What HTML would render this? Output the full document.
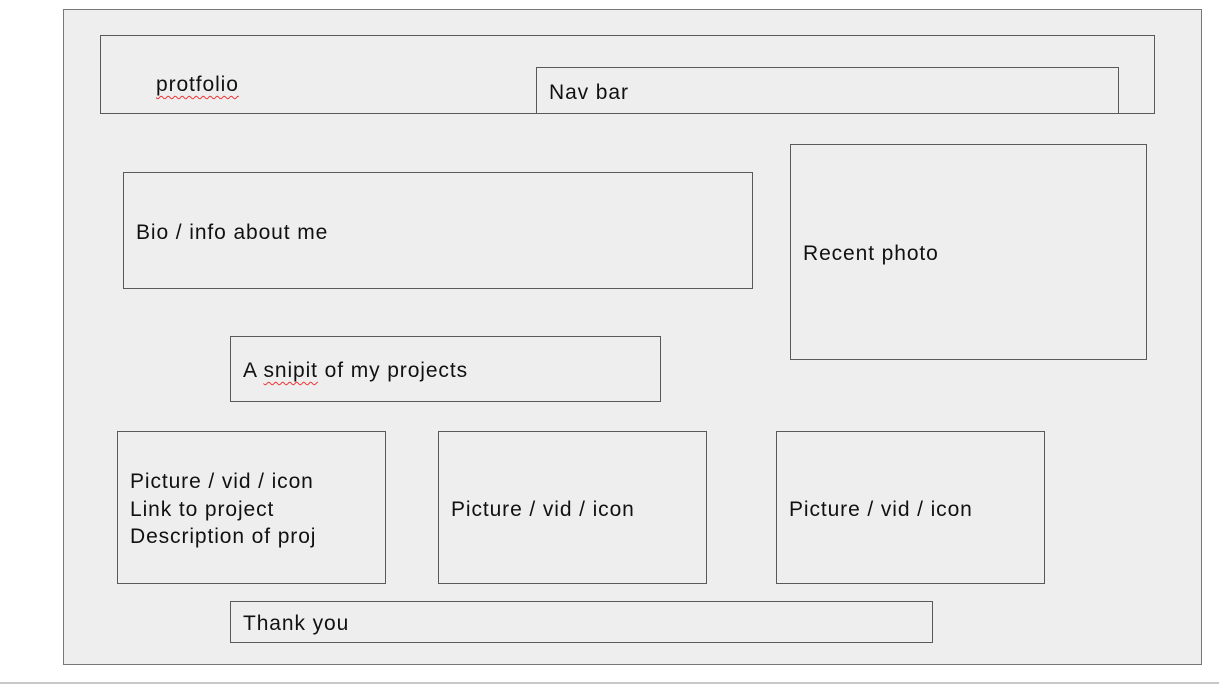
<html><head><style>
body{margin:0;width:1219px;height:685px;background:#fff;position:relative;overflow:hidden;font-family:"Liberation Sans",Arial,sans-serif;font-size:21px;letter-spacing:0.9px;color:#111}
.b{position:absolute;border:1px solid #595959;box-sizing:border-box;background:#eee}
.t{position:absolute;white-space:nowrap;line-height:27px}
.sq{text-decoration:underline wavy #e33;text-decoration-thickness:1px;text-underline-offset:4px;text-decoration-skip-ink:none}
</style></head><body>
<div class="b" style="left:63px;top:9px;width:1139px;height:656px;border-color:#777"></div>
<div style="position:absolute;left:0;top:682px;width:1219px;height:2px;background:#c8c8c8"></div>
<div class="b" style="left:100px;top:35px;width:1055px;height:79px"></div>
<div class="t" style="left:156px;top:71px"><span class="sq">protfolio</span></div>
<div class="b" style="left:536px;top:67px;width:583px;height:47px"></div>
<div class="t" style="left:549px;top:79px">Nav bar</div>
<div class="b" style="left:123px;top:172px;width:630px;height:117px"></div>
<div class="t" style="left:136px;top:219px">Bio / info about me</div>
<div class="b" style="left:790px;top:144px;width:357px;height:216px"></div>
<div class="t" style="left:803px;top:240px">Recent photo</div>
<div class="b" style="left:230px;top:336px;width:431px;height:66px"></div>
<div class="t" style="left:243px;top:357px">A <span class="sq">snipit</span> of my projects</div>
<div class="b" style="left:117px;top:431px;width:269px;height:153px"></div>
<div class="t" style="left:130px;top:468px;line-height:27.5px">Picture / vid / icon<br>Link to project<br>Description of proj</div>
<div class="b" style="left:438px;top:431px;width:269px;height:153px"></div>
<div class="t" style="left:451px;top:496px">Picture / vid / icon</div>
<div class="b" style="left:776px;top:431px;width:269px;height:153px"></div>
<div class="t" style="left:789px;top:496px">Picture / vid / icon</div>
<div class="b" style="left:230px;top:601px;width:703px;height:42px"></div>
<div class="t" style="left:243px;top:610px">Thank you</div>
</body></html>
